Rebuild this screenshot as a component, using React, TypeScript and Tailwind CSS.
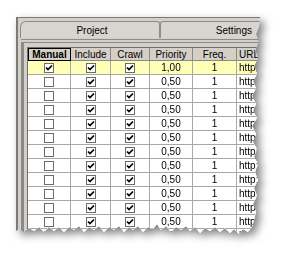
import React from "react";

const rows = Array.from({ length: 13 }, (_, i) => ({
  manual: i === 0,
  priority: i === 0 ? "1,00" : "0,50",
}));

function Box({ on }: { on: boolean }) {
  return (
    <span className="w-[10px] h-[10px] border border-[#6c6c6c] bg-white flex items-center justify-center">
      {on && (
        <svg width="8" height="8" viewBox="0 0 8 8">
          <path d="M1 3.5 L3 5.6 L7 1.5" stroke="#000" strokeWidth="1.7" fill="none" />
        </svg>
      )}
    </span>
  );
}

export default function App() {
  return (
    <div className="w-[283px] h-[256px] bg-white overflow-hidden text-[10px] text-black [font-family:'Liberation_Sans',Arial,sans-serif]">
      <div className="pt-[17px] pl-[16px]">
        <div className="w-[250px] [filter:drop-shadow(4px_4px_4px_rgba(0,0,0,0.5))]">
          <div className="w-[246px] h-[222px] bg-[#d4d0c8] border-l-2 border-t border-[#7a7a7a] flex flex-col [clip-path:polygon(0_0,244px_0,243px_10px,240px_17px,243px_25px,239px_33px,242px_41px,238px_49px,241px_57px,237px_64px,240px_71px,236px_79px,240px_87px,237px_94px,241px_101px,236px_109px,240px_117px,237px_125px,241px_132px,238px_140px,242px_147px,239px_155px,242px_163px,238px_171px,241px_179px,237px_187px,240px_195px,238px_203px,236px_210px,232px_215px,227px_212px,223px_217px,218px_212px,214px_216px,209px_211px,204px_215px,199px_210px,194px_214px,189px_211px,184px_216px,179px_210px,174px_214px,170px_209px,165px_213px,160px_210px,155px_215px,150px_209px,145px_213px,141px_207px,137px_212px,132px_210px,127px_215px,122px_209px,117px_213px,113px_210px,108px_215px,103px_209px,98px_213px,93px_210px,88px_215px,83px_209px,78px_213px,73px_210px,68px_215px,63px_209px,58px_213px,53px_210px,48px_215px,43px_210px,38px_214px,33px_210px,28px_215px,23px_210px,18px_214px,13px_211px,8px_215px,3px_212px,0_214px)]">
            <div className="h-[20px] flex pl-[2px] pt-[3px] shrink-0">
              <div className="w-[140px] border-l border-t border-r border-[#8c8c8c] rounded-tl-[6px] rounded-tr-[3px] bg-[#d8d5d0] flex items-center justify-center pl-[4px]">
                Project
              </div>
              <div className="flex-1 border-t border-l border-[#8c8c8c] rounded-tl-[3px] bg-[#d8d5d0] flex items-center justify-end pr-[10px]">
                Settings
              </div>
            </div>
            <div className="flex-1 ml-[3px] border-t border-[#8c8c8c] mt-[1px] pt-[2px]">
              <div className="h-full border-l-[3px] border-t border-[#8a8a8a] pl-[3px] pt-[4px]">
                <div className="border-l border-t border-[#6e6e6e] bg-white">
                  <div className="grid grid-cols-[43px_40px_39px_43px_44px_40px] bg-[#d4d0c8]">
                    <div className="h-[13px] flex items-center justify-center font-bold border border-black">Manual</div>
                    <div className="h-[13px] flex items-center justify-center border-r border-b border-[#8a8a8a]">Include</div>
                    <div className="h-[13px] flex items-center justify-center border-r border-b border-[#8a8a8a]">Crawl</div>
                    <div className="h-[13px] flex items-center justify-center border-r border-b border-[#8a8a8a]">Priority</div>
                    <div className="h-[13px] flex items-center justify-center border-r border-b border-[#8a8a8a]">Freq.</div>
                    <div className="h-[13px] flex items-center pl-[2px] border-b border-[#8a8a8a]">URL</div>
                  </div>
                  {rows.map((r, i) => (
                    <div
                      key={i}
                      className={
                        "grid grid-cols-[43px_40px_39px_43px_44px_40px] " +
                        (i === 0 ? "bg-[#ffffb8]" : "bg-white")
                      }
                    >
                      <div className="h-[14px] flex items-center justify-center border-r border-b border-[#a8a8a8]">
                        <Box on={r.manual} />
                      </div>
                      <div className="h-[14px] flex items-center justify-center border-r border-b border-[#a8a8a8]">
                        <Box on />
                      </div>
                      <div className="h-[14px] flex items-center justify-center border-r border-b border-[#a8a8a8]">
                        <Box on />
                      </div>
                      <div className="h-[14px] flex items-center justify-center border-r border-b border-[#a8a8a8]">
                        {r.priority}
                      </div>
                      <div className="h-[14px] flex items-center justify-center border-r border-b border-[#a8a8a8]">
                        1
                      </div>
                      <div className="h-[14px] flex items-center pl-[2px] border-b border-[#a8a8a8]">
                        http://
                      </div>
                    </div>
                  ))}
                </div>
              </div>
            </div>
          </div>
        </div>
      </div>
    </div>
  );
}
